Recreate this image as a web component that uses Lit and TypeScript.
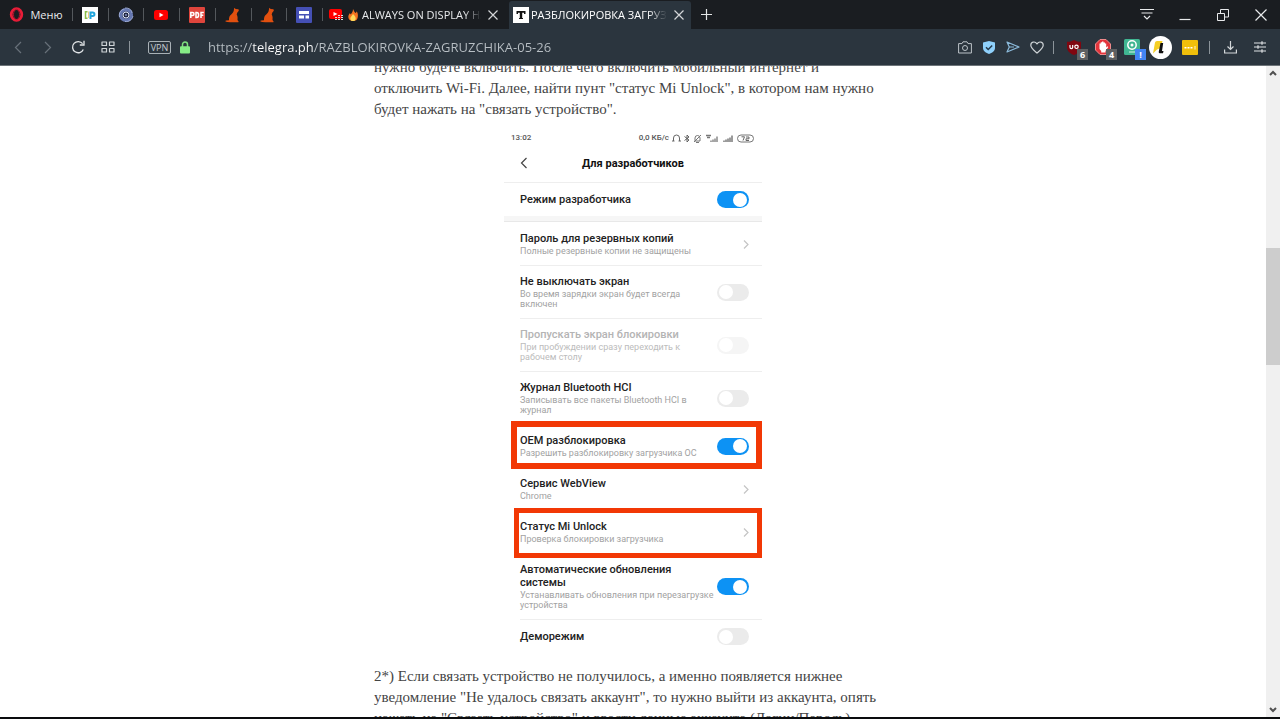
import { LitElement, html, css, svg, nothing, TemplateResult } from "lit";
import { customElement } from "lit/decorators.js";
import { classMap } from "lit/directives/class-map.js";

interface Setting {
  title: string;
  note?: string;
  kind: "switch" | "link";
  on?: boolean;
  disabled?: boolean;
  line?: boolean;
  mark?: "oem" | "unlock";
}

const SETTINGS: Setting[] = [
  { title: "Пароль для резервных копий", note: "Полные резервные копии не защищены", kind: "link", line: true },
  { title: "Не выключать экран", note: "Во время зарядки экран будет всегда включен", kind: "switch", line: true },
  { title: "Пропускать экран блокировки", note: "При пробуждении сразу переходить к рабочем столу", kind: "switch", disabled: true, line: true },
  { title: "Журнал Bluetooth HCI", note: "Записывать все пакеты Bluetooth HCI в журнал", kind: "switch" },
  { title: "OEM разблокировка", note: "Разрешить разблокировку загрузчика ОС", kind: "switch", on: true, mark: "oem" },
  { title: "Сервис WebView", note: "Chrome", kind: "link" },
  { title: "Статус Mi Unlock", note: "Проверка блокировки загрузчика", kind: "link", mark: "unlock" },
  { title: "Автоматические обновления системы", note: "Устанавливать обновления при перезагрузке устройства", kind: "switch", on: true, line: true },
  { title: "Деморежим", kind: "switch" },
];

const icon = (w: number, h: number, body: TemplateResult) =>
  html`<svg width=${w} height=${h} viewBox="0 0 ${w} ${h}" fill="none" aria-hidden="true">${body}</svg>`;

const cross = icon(12, 12, svg`<path d="M1.5 1.5l9 9M10.5 1.5l-9 9" stroke="#d4d6d8" stroke-width="1.2"/>`);

const cat = icon(16, 16, svg`<path fill="#e2500f" d="M8.600 4.300 9.300.8l1.400 1.200 2.800.2.300 1.600-1.600 2-.5 1.700c1.200 2.200.9 4 .8 5.500l1.200 1.700-.4.500H5.400L2.300 15 .6 14.600c-.5-.6 0-1.200.7-1.200l2.700-.2c-.2-2.600.6-4.400 2.200-5.700 1.100-.9 1.900-1.900 2.400-3.200z"/>`);

const favicons: { name: string; art: TemplateResult }[] = [
  { name: "LP", art: icon(16, 16, svg`<path fill="#fff" d="M0 0h16v16H0z"/><path d="M5.500 4.700H3.500v6.500h2" stroke="#8bbf4a" stroke-width="1.500"/><path d="M6.700 4.500v6.500" stroke="#e0b13c" stroke-width=".8"/><path d="M8.500 12V5.500h2.200a1.700 1.700 0 0 1 0 3.500H8.500" stroke="#22a5dc" stroke-width="2"/>`) },
  { name: "Спираль", art: icon(16, 16, svg`<circle cx="8" cy="8" r="5.300" stroke="#6577b0" stroke-width="3.600"/><path d="M7 1c4-.3 7 2 7 5M15 9c-1 4-4 6-8 5.500M1.500 10c-1-4 1.500-7.500 5-8" stroke="#aebbe2" stroke-width=".8"/><circle cx="8" cy="8" r="3" fill="#20273f" stroke="#dde4fa"/><circle cx="8" cy="8" r="1" fill="#8291c4"/>`) },
  { name: "YouTube", art: icon(14, 12, svg`<rect y="1" width="14" height="10" rx="2.500" fill="#f00"/><path d="M5.500 3.800v4.400L9.500 6z" fill="#fff"/>`) },
  { name: "PDF", art: icon(16, 16, svg`<rect width="16" height="16" rx="1" fill="#df453c"/><path d="M1.800 11V5.500h1.700a1.500 1.500 0 0 1 0 3H2M7 5.500v5h.8c2.400 0 2.400-5 0-5zM12 11V5.500h2.800M12 8.200h2.300" stroke="#fff" stroke-width="1.500"/>`) },
  { name: "Кот", art: cat },
  { name: "Кот", art: cat },
  { name: "Макет", art: icon(16, 16, svg`<rect width="16" height="16" rx="1" fill="#4550b5"/><path d="M3 4h10v3H3zM3 8.500h5v3H3zM9.500 8.500H13v3H9.500z" fill="#fff"/>`) },
];

@customElement("browser-tabs")
export class BrowserTabs extends LitElement {
  static styles = css`
    :host { display: flex; height: 29px; background: #1a1d21; color: #e8eaec; font: 11px/18px "Open Sans", "Noto Sans", sans-serif; }
    button { all: unset; box-sizing: border-box; display: flex; align-items: center; justify-content: center; }
    svg { display: block; flex: none; }
    .menu { width: 72px; gap: 6px; flex: none; }
    .pins { display: grid; grid-template-columns: repeat(7, 1fr); width: 250px; flex: none; }
    .pin, .tab { position: relative; }
    .pin::before, .tab.idle::before { content: ""; position: absolute; left: 0; top: 8px; height: 13px; width: 1px; background: #54585c; }
    .tab { display: flex; align-items: center; box-sizing: border-box; flex: 0 1 187px; padding: 0 10px 0 7px; gap: 2px; min-width: 0; }
    .tab.active { flex-basis: 182px; padding: 0 6px 0 4px; background: #2b353e; margin-top: 1px; border-radius: 3px 3px 0 0; color: #fff; }
    .label { flex: 1; min-width: 0; overflow: hidden; white-space: nowrap; mask-image: linear-gradient(90deg, #000 86%, transparent 100%); }
    .close { width: 12px; height: 12px; flex: none; margin-left: 4px; }
    .add { width: 30px; }
    .window { margin-left: auto; display: flex; }
    .window button { width: 38px; }
  `;
  render() {
    return html`
      <button class="menu">
        ${icon(15, 15, svg`<ellipse cx="7.500" cy="7.500" rx="5.300" ry="5.900" stroke="#e91d38" stroke-width="2.800"/><ellipse cx="7.500" cy="7.500" rx="3" ry="5.200" stroke="#b5122c" stroke-width="1"/>`)}
        <span>Меню</span>
      </button>
      <div class="pins">${favicons.map((f) => html`<button class="pin" aria-label=${f.name}>${f.art}</button>`)}</div>
      <div class="tab idle">
        ${icon(15, 14, svg`<rect y="1" width="13" height="10" rx="2" fill="#f00"/><path d="M4.500 4v4l4-2z" fill="#fff"/><path d="M6 9.500h8M6 11.500h8M9 7.500h5" stroke="#ddd" stroke-dasharray="2 1"/>`)}
        ${icon(14, 14, svg`<path d="M7 1c1 2 1.500 3 2.500 4 .8-.2 1-1 1-1.700C12 5 12 7 11.800 9 11.400 12 9.500 13 7 13s-4.600-1.200-4.700-4c0-1.500.6-2.800 1.700-4 .2.900.4 1.200.8 1.300C6 5 7 3.500 7 1z" fill="#f57320"/><path d="M7 6c2 2 2.700 3 2.700 4.400C9.700 12 8.500 13 7 13s-2.700-1-2.700-2.600C4.300 9 6 8 7 6z" fill="#ffd95a"/>`)}
        <span class="label">ALWAYS ON DISPLAY НА</span>
        <button class="close" aria-label="Закрыть вкладку">${cross}</button>
      </div>
      <div class="tab active">
        ${icon(16, 16, svg`<rect width="16" height="16" fill="#fff"/><path d="M3.500 4h9v3H11V5.800H9.200v5.200H10v1H6v-1h.8V5.800H5V7H3.500z" fill="#111"/>`)}
        <span class="label">РАЗБЛОКИРОВКА ЗАГРУЗ</span>
        <button class="close" aria-label="Закрыть вкладку">${cross}</button>
      </div>
      <button class="add" aria-label="Новая вкладка">${icon(11, 11, svg`<path d="M5.500 0v11M0 5.500h11" stroke="#e3e5e6" stroke-width="1.200"/>`)}</button>
      <div class="window">
        <button aria-label="Меню вкладок">${icon(14, 13, svg`<path d="M0 1.500h14M1.500 5h11M4 8l3 3 3-3" stroke="#e8eaec" stroke-width="1.200"/>`)}</button>
        <button aria-label="Свернуть">${icon(12, 12, svg`<path d="M.5 10.500h11" stroke="#e8eaec" stroke-width="1.200"/>`)}</button>
        <button aria-label="Восстановить">${icon(12, 12, svg`<path d="M.5 4.500h7v7h-7zM3.500 4V.500h8v7.500H8" stroke="#e8eaec"/>`)}</button>
        <button aria-label="Закрыть">${icon(12, 12, svg`<path d="M.5.5l11 11M11.500.5l-11 11" stroke="#e8eaec" stroke-width="1.200"/>`)}</button>
      </div>
    `;
  }
}

@customElement("address-bar")
export class AddressBar extends LitElement {
  static styles = css`
    :host { display: flex; align-items: stretch; box-sizing: border-box; height: 37px; padding: 0 5px 0 3px; background: #2b353e; border-bottom: 1px solid #6d7479; color: #c3c9ce; font: 13px/18px "Open Sans", "Noto Sans", sans-serif; }
    button { all: unset; box-sizing: border-box; position: relative; display: flex; align-items: center; justify-content: center; flex: none; width: 30px; }
    svg { display: block; }
    .sep { flex: none; align-self: center; width: 1px; height: 13px; margin: 0 6px; background: #8c949a; }
    .sep.tight { margin: 0 5px 0 4px; }
    .sep.end { margin: 0 5px; }
    .vpn { width: 23px; height: 13px; align-self: center; margin-left: 12px; border: 1px solid #a9b1b6; border-radius: 2px; font-size: 9px; line-height: 11px; }
    .lock { width: 27px; }
    .url { flex: 1; min-width: 0; margin: 0 0 0 10px; padding: 0; border: 0; outline: 0; font: inherit; background: linear-gradient(90deg, #b9c0c5 44px, #fff 44px 106px, #b9c0c5 106px); background-clip: text; -webkit-background-clip: text; -webkit-text-fill-color: transparent; }
    .tool { width: 24px; }
    .ext { width: 29px; }
    .badge { position: absolute; right: 0; bottom: 5px; width: 11px; height: 11px; background: #5d6062; color: #fff; font: 700 9px/11px "Open Sans", sans-serif; text-align: center; }
    .badge.blue { background: #4285f4; }
  `;
  render() {
    return html`
      <button aria-label="Назад">${icon(8, 13, svg`<path d="M7 1L1.500 6.500 7 12" stroke="#68717a" stroke-width="1.200"/>`)}</button>
      <button aria-label="Вперёд">${icon(8, 13, svg`<path d="M1 1l5.500 5.500L1 12" stroke="#68717a" stroke-width="1.200"/>`)}</button>
      <button aria-label="Обновить">${icon(14, 14, svg`<path d="M12.300 9.400A5.600 5.600 0 1 1 11.600 3.700" stroke="#e3e6e8" stroke-width="1.300"/><path d="M13 .8V5H8.800" stroke="#e3e6e8" stroke-width="1.300"/>`)}</button>
      <button aria-label="Экспресс-панель">${icon(14, 12, svg`<path d="M1 1h4.500v3.500H1zM8.500 1H13v3.500H8.500zM1 7.500h4.500V11H1zM8.500 7.500H13V11H8.500z" stroke="#ced3d6" stroke-width="1.200" stroke-linejoin="round"/>`)}</button>
      <span class="sep"></span>
      <button class="vpn">VPN</button>
      <button class="lock" aria-label="Сведения о сайте">${icon(10, 13, svg`<path d="M2.500 6V3.500a2.500 2.500 0 0 1 5 0V6" stroke="#7fe07f" stroke-width="1.500"/><rect y="5.200" width="10" height="7.300" rx="1" fill="#86ec86"/>`)}</button>
      <input class="url" type="text" aria-label="Адрес" .value=${"https://telegra.ph/RAZBLOKIROVKA-ZAGRUZCHIKA-05-26"} />
      <button class="tool" aria-label="Снимок">${icon(14, 13, svg`<path d="M.6 2.600H4L5 .8h4l1 1.800h3.400v9.400H.6z" stroke="#bcc3c8" stroke-linejoin="round"/><circle cx="7" cy="7" r="2.500" stroke="#bcc3c8"/>`)}</button>
      <button class="tool" aria-label="Защита">${icon(12, 13, svg`<path d="M6 0l6 1.500V7c0 3-3 5-6 6-3-1-6-3-6-6V1.500z" fill="#8fd0fb"/><path d="M3 6.300l2.200 2.200L9.200 4.500" stroke="#24394a" stroke-width="1.500"/>`)}</button>
      <button class="tool" aria-label="Отправить">${icon(14, 12, svg`<path d="M1 1l12 5L1 11l2.300-5zM3.300 6H8" stroke="#8cbbdc" stroke-width="1.200" stroke-linejoin="round"/>`)}</button>
      <button class="tool" aria-label="Закладка">${icon(14, 13, svg`<path d="M7 12C3.500 9 .8 7 .8 4.200.8 1 4.800-.3 7 2.800c2.200-3.100 6.200-1.800 6.200 1.400C13.200 7 10.500 9 7 12z" stroke="#ced3d6" stroke-width="1.200"/>`)}</button>
      <span class="sep tight"></span>
      <button class="ext" aria-label="uBlock Origin, 6">${icon(14, 15, svg`<path d="M7 0c2 1.400 4 1.800 7 1.800V7c0 4-3 6.500-7 8-4-1.500-7-4-7-8V1.800C3 1.800 5 1.400 7 0z" fill="#800610"/><path d="M3 5v2.200c0 1.800 2.700 1.800 2.700 0V5" stroke="#fff" stroke-width="1.200"/><circle cx="9.500" cy="6.800" r="1.700" stroke="#fff" stroke-width="1.200"/>`)}<span class="badge">6</span></button>
      <button class="ext" aria-label="AdBlock, 4">${icon(16, 16, svg`<path d="M5 .5h6L15.500 5v6L11 15.500H5L.5 11V5z" fill="#e3343b" stroke="#ef8a8c"/><path d="M4.500 8V4.500h1.200V3.200H7V2.500h1.500V3.500H10v1h1.200v4l1.300-1.200.8.8L10.500 12v1.500H6.200V12L4.500 10z" fill="#fff"/>`)}<span class="badge">4</span></button>
      <button class="ext" aria-label="Диспетчер">${icon(16, 16, svg`<rect width="16" height="16" rx="1.500" fill="#40b692"/><circle cx="8" cy="6" r="4.200" stroke="#fff" stroke-width="1.500"/><circle cx="8" cy="6" r="1.500" fill="#fff"/><path d="M5 13h6" stroke="#d4f3e8"/>`)}<span class="badge blue">!</span></button>
      <button class="ext" aria-label="Расширение">${icon(23, 23, svg`<circle cx="11.500" cy="11.500" r="11.500" fill="#fff"/><path d="M4 17.500 6 6.500Q6.300 5 8 5h5.500l-2 7-3.500 1.500z" fill="#f5cf25"/><path d="M11.500 7h2.700l-1.200 8h1.500l-.5 2.200h-3.500q-1-.2-.7-1.700z" fill="#111"/>`)}</button>
      <button class="ext" aria-label="Пароли">${icon(16, 15, svg`<rect width="16" height="15" rx="1" fill="#f0bf0b"/><path d="M2.500 7.700h9" stroke="#fff" stroke-width="1.600" stroke-dasharray="2 1"/><path d="M13 6v3.500" stroke="#fff" stroke-width=".8"/>`)}</button>
      <span class="sep end"></span>
      <button aria-label="Загрузки">${icon(13, 13, svg`<path d="M6.500 0v8.500M3.500 5.500l3 3 3-3M.6 8.500V12h11.800V8.500" stroke="#d4d8da" stroke-width="1.200"/>`)}</button>
      <button aria-label="Простая настройка">${icon(12, 12, svg`<path d="M0 2h12M0 6h12M0 10h12M8 .2v3.600M4 4.200v3.600M8 8.200v3.600" stroke="#e0e3e5" stroke-width="1.200"/>`)}</button>
    `;
  }
}

@customElement("phone-settings")
export class PhoneSettings extends LitElement {
  static styles = css`
    :host { display: block; box-sizing: border-box; padding-top: 4px; background: #fff; color: #222; font: 500 11px/13px Roboto, sans-serif; }
    svg { display: block; }
    button { all: unset; }
    .status { display: flex; align-items: center; gap: 3px; height: 12px; padding: 0 8px 0 7px; font: 500 8px/12px Roboto, sans-serif; color: #555; }
    .clock { margin-right: auto; }
    .head { display: grid; grid-template-columns: 40px 1fr 40px; align-items: center; height: 38px; border-bottom: 1px solid #eee; }
    .back { justify-self: center; }
    .name { margin: 0; font: 700 11px/13px Roboto, sans-serif; text-align: center; color: #111; }
    .list { margin: 0; padding: 0; list-style: none; }
    .row { position: relative; display: flex; align-items: center; padding-right: 13px; margin-left: 16px; border-bottom: 1px solid transparent; }
    .row.line { border-bottom-color: #eee; }
    .row.first { padding-top: 8px; padding-bottom: 8px; border-bottom: 0; }
    .band { height: 5px; background: #f6f6f6; border-bottom: 1px solid #e8e8e8; margin-bottom: 1px; }
    .text { flex: 1; display: block; padding: 9px 0; }
    .row.first .text { padding: 2px 0; }
    .row.single .text { padding: 10px 0; }
    .title { display: block; max-width: 170px; }
    .note { display: block; max-width: 180px; margin-top: 1px; font: 400 9px/10px Roboto, sans-serif; color: #a2a2a2; }
    .wide { max-width: none; }
    .off .title { color: #b4b4b4; }
    .off .note { color: #bcbcbc; }
    .switch { appearance: none; box-sizing: border-box; flex: none; width: 32px; height: 17px; margin: 0; border-radius: 9px; background: #ebebeb; display: flex; align-items: center; padding: 0 2px; }
    .switch::before { content: ""; width: 14px; height: 14px; border-radius: 50%; background: #fff; }
    .switch:checked { background: #0d92f4; justify-content: flex-end; }
    .switch:disabled { background: #f5f5f5; }
    .mark { position: absolute; box-sizing: border-box; border: 6px solid #f23805; pointer-events: none; right: 0; }
    .mark.oem { left: -9px; top: -4px; bottom: -2px; }
    .mark.unlock { left: -6px; top: -3px; bottom: -5px; border-width: 5px; }
  `;
  private row(s: Setting, i: number) {
    const id = `s${i}`;
    const body = html`<span class="title">${s.title}</span>${s.note ? html`<span class=${classMap({ note: true, wide: !!s.on })}>${s.note}</span>` : nothing}`;
    return html`<li class=${classMap({ row: true, line: !!s.line, off: !!s.disabled, single: !s.note })}>
      ${s.kind === "switch"
        ? html`<label class="text" for=${id}>${body}</label><input class="switch" type="checkbox" id=${id} .checked=${!!s.on} ?disabled=${s.disabled} />`
        : html`<span class="text">${body}</span><button aria-label=${s.title}>${icon(6, 9, svg`<path d="M1 .5l4 4-4 4" stroke="#c4c4c4" stroke-width="1.200"/>`)}</button>`}
      ${s.mark ? html`<span class=${classMap({ mark: true, [s.mark]: true })}></span>` : nothing}
    </li>`;
  }
  render() {
    return html`
      <div class="status">
        <span class="clock">13:02</span>
        <span>0,0 КБ/с</span>
        ${icon(9, 9, svg`<path d="M1.500 7V4a3 3 0 0 1 6 0v3M0 7h2.500M6.500 7H9" stroke="#666"/>`)}
        ${icon(6, 9, svg`<path d="M.5 2.500L5 6 3 8V1l2 2L.5 6.500" stroke="#555" stroke-width=".9"/>`)}
        ${icon(9, 9, svg`<path d="M2 7V4a2.500 2.500 0 0 1 5 0v3zM1 8L8 1M3 8.500h3" stroke="#777"/>`)}
        ${icon(15, 9, svg`<path d="M1 1.500h5M2 3.500h3M6 8V6.500M8 8V5.500M10 8V4.500M12 8V2.500" stroke="#777" stroke-width="1.300"/>`)}
        ${icon(11, 9, svg`<path d="M1 8V6.500M3 8V5.500M5 8V4.500M7 8V3.500M9 8V1.500" stroke="#666" stroke-width="1.300"/>`)}
        ${icon(17, 9, svg`<rect x=".5" y="1" width="16" height="7" rx="3.500" stroke="#777"/><path d="M4.500 2.800h3L6 6.500M9 3h3v1.800H9v1.700h3" stroke="#666"/>`)}
      </div>
      <div class="head">
        <button class="back" aria-label="Назад">${icon(8, 12, svg`<path d="M6.500 1l-5 5 5 5" stroke="#444" stroke-width="1.200"/>`)}</button>
        <h2 class="name">Для разработчиков</h2>
      </div>
      <div class="row first">
        <label class="text" for="dev"><span class="title">Режим разработчика</span></label>
        <input class="switch" type="checkbox" id="dev" checked />
      </div>
      <div class="band"></div>
      <ul class="list">${SETTINGS.map((s, i) => this.row(s, i))}</ul>
    `;
  }
}

@customElement("app-root")
export class AppRoot extends LitElement {
  static styles = css`
    :host { display: flex; flex-direction: column; height: 100vh; overflow: hidden; background: #fff; }
    .view { flex: 1; min-height: 0; display: flex; }
    .page { flex: 1; min-width: 0; overflow: hidden; }
    .article { max-width: 518px; margin: -9px auto 0; color: #444; font: 15px/21px "Liberation Serif", serif; }
    .para { margin: 0; white-space: nowrap; }
    .shot { max-width: 258px; margin: 8px auto 12px; }
    .scroll { width: 14px; flex: none; background: #f0f0f0; display: grid; grid-template-rows: 14px 168px 117px 1fr 14px; justify-items: center; align-items: center; }
    .thumb { align-self: stretch; justify-self: stretch; grid-row: 3; background: #cdcdcd; }
    .down { grid-row: 5; }
    .edge { height: 2px; flex: none; background: #0a0c0e; }
  `;
  render() {
    return html`
      <browser-tabs></browser-tabs>
      <address-bar></address-bar>
      <div class="view">
        <main class="page">
          <article class="article">
            <p class="para">нужно будете включить. После чего включить мобильный интернет и<br />отключить Wi-Fi. Далее, найти пунт "статус Mi Unlock", в котором нам нужно<br />будет нажать на "связать устройство".</p>
            <phone-settings class="shot"></phone-settings>
            <p class="para">2*) Если связать устройство не получилось, а именно появляется нижнее<br />уведомление "Не удалось связать аккаунт", то нужно выйти из аккаунта, опять<br />нажать на "Связать устройство" и ввести данные аккаунта (Логин/Пароль)</p>
          </article>
        </main>
        <div class="scroll">
          ${icon(8, 6, svg`<path d="M1 5l3-3 3 3" stroke="#505050" stroke-width="2"/>`)}
          <div class="thumb"></div>
          <svg class="down" width="8" height="6" viewBox="0 0 8 6" fill="none"><path d="M1 1l3 3 3-3" stroke="#505050" stroke-width="2"/></svg>
        </div>
      </div>
      <div class="edge"></div>
    `;
  }
}
